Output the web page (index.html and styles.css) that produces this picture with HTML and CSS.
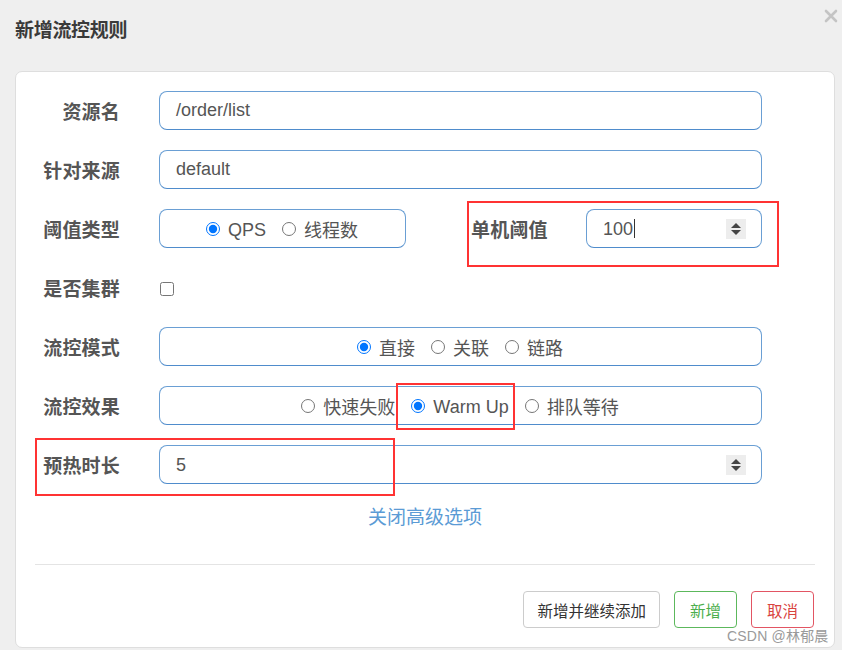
FILE: index.html
```html
<!DOCTYPE html>
<html lang="zh">
<head>
<meta charset="utf-8">
<title>新增流控规则</title>
<link rel="stylesheet" href="styles.css">
</head>
<body>
<div class="page">
  <header class="head">
    <h1 class="title">新增流控规则</h1>
    <span class="close"><svg width="14" height="14" viewBox="0 0 14 14"><path d="M2 2 L12 12 M12 2 L2 12" stroke="#c4c4c4" stroke-width="2.6" stroke-linecap="round"/></svg></span>
  </header>
  <div class="card">
    <div class="form">
      <div class="row">
        <label class="lbl">资源名</label>
        <div class="field">/order/list</div>
      </div>
      <div class="row">
        <label class="lbl">针对来源</label>
        <div class="field">default</div>
      </div>
      <div class="row">
        <label class="lbl">阈值类型</label>
        <div class="field field-short group">
          <label class="opt"><input type="radio" name="t" checked><span class="latin">QPS</span></label>
          <label class="opt"><input type="radio" name="t">线程数</label>
        </div>
        <label class="lbl lbl-inline">单机阈值</label>
        <div class="field grow">
          <span class="val">100</span><span class="caret"></span>
          <span class="spin"><i class="up"></i><i class="down"></i></span>
        </div>
      </div>
      <div class="row">
        <label class="lbl">是否集群</label>
        <input class="check" type="checkbox">
      </div>
      <div class="row">
        <label class="lbl">流控模式</label>
        <div class="field group">
          <label class="opt"><input type="radio" name="m" checked>直接</label>
          <label class="opt"><input type="radio" name="m">关联</label>
          <label class="opt"><input type="radio" name="m">链路</label>
        </div>
      </div>
      <div class="row">
        <label class="lbl">流控效果</label>
        <div class="field group">
          <label class="opt"><input type="radio" name="e">快速失败</label>
          <label class="opt"><input type="radio" name="e" checked><span class="latin">Warm Up</span></label>
          <label class="opt"><input type="radio" name="e">排队等待</label>
        </div>
      </div>
      <div class="row">
        <label class="lbl">预热时长</label>
        <div class="field">
          <span class="val">5</span>
          <span class="spin"><i class="up"></i><i class="down"></i></span>
        </div>
      </div>
    </div>
    <div class="more"><a class="link">关闭高级选项</a></div>
    <hr class="sep">
    <div class="actions">
      <button class="btn btn-wide">新增并继续添加</button>
      <button class="btn btn-ok">新增</button>
      <button class="btn btn-cancel">取消</button>
    </div>
  </div>
  <div class="mark mark-1"></div>
  <div class="mark mark-2"></div>
  <div class="mark mark-3"></div>
  <div class="watermark">CSDN @林郁晨</div>
</div>
</body>
</html>
```

FILE: styles.css
```css
* { box-sizing: border-box; }
html, body { margin: 0; padding: 0; }
body {
  background: #efefef;
  font-family: "Liberation Sans", "Noto Sans CJK SC", sans-serif;
  color: #555;
  width: 842px;
  height: 650px;
  overflow: hidden;
}
.page {
  position: relative;
  padding: 0 7px 0 15px;
}
.head {
  height: 71px;
  padding-top: 18px;
}
.title {
  margin: 0;
  font-size: 19px;
  line-height: 26px;
  font-weight: bold;
  color: #3a3a3a;
  letter-spacing: -0.3px;
}
.close {
  position: absolute;
  top: 9px;
  right: 4px;
  width: 14px;
  height: 14px;
}
.close svg { display: block; }
.card {
  background: #fff;
  border: 1px solid #dedede;
  border-radius: 7px;
  height: 577px;
  padding: 19px 0 0 0;
}
.form {
  display: flex;
  flex-direction: column;
  gap: 20px;
  padding-right: 72px;
}
.row {
  display: flex;
  align-items: center;
  height: 39px;
}
.lbl {
  width: 104px;
  flex: none;
  text-align: right;
  font-size: 19px;
  font-weight: bold;
  color: #555;
  margin-right: 39px;
  letter-spacing: 0.2px;
}
.lbl-inline {
  text-align: left;
  width: 115px;
  margin: 0 0 0 65px;
}
.field {
  flex: 1;
  height: 39px;
  border: 1px solid #6a9fd4;
  border-bottom-color: #4f8ccc;
  border-radius: 8px;
  display: flex;
  align-items: center;
  padding: 0 15px 0 16px;
  font-size: 18px;
  color: #555;
}
.field-short { flex: none; width: 247px; }
.grow { flex: 1; }
.group { justify-content: center; padding: 0 4px 0 0; }
.opt {
  display: inline-flex;
  align-items: center;
  font-size: 18px;
  color: #555;
  margin-left: 3px;
  margin-right: 13px;
  white-space: nowrap;
}
.opt:last-child { margin-right: 0; }
.opt input {
  margin: 0 8px 0 0;
  width: 14px;
  height: 14px;
}
.latin { position: relative; top: 2px; }
.val { line-height: 1; }
.caret {
  display: inline-block;
  width: 1px;
  height: 19px;
  background: #333;
  margin-left: 1px;
}
.spin {
  margin-left: auto;
  width: 20px;
  height: 20px;
  background: #ededed;
  display: flex;
  flex-direction: column;
  align-items: center;
  justify-content: center;
  gap: 2px;
}
.spin i {
  display: block;
  width: 0;
  height: 0;
  border-left: 5px solid transparent;
  border-right: 5px solid transparent;
}
.spin .up { border-bottom: 5px solid #444; }
.spin .down { border-top: 5px solid #444; }
.check {
  margin: 3px 0 0 1px;
  width: 14px;
  height: 14px;
}
.more {
  margin-top: 22px;
  text-align: center;
  height: 24px;
  line-height: 24px;
}
.link {
  font-size: 19px;
  color: #5b9bd5;
  cursor: pointer;
}
.sep {
  margin: 34px 19px 0 19px;
  border: 0;
  border-top: 1px solid #e4e4e4;
  height: 0;
}
.actions {
  display: flex;
  justify-content: flex-end;
  gap: 14px;
  margin-top: 26px;
  padding-right: 20px;
}
.btn {
  height: 37px;
  padding: 0 15px;
  font-family: "Liberation Sans", "Noto Sans CJK SC", sans-serif;
  font-size: 15.5px;
  background: #fff;
  border: 1px solid #cccccc;
  border-radius: 4px;
  color: #333;
}
.btn-wide { padding: 0 13px; }
.btn-ok { border-color: #5cb85c; color: #4cae4c; padding: 0 15px; }
.btn-cancel { border-color: #e25563; color: #d9443f; padding: 0 15px; }
.mark {
  position: absolute;
  border: 2.5px solid #ff3333;
}
.mark-1 { left: 467px; top: 201px; width: 312px; height: 66px; }
.mark-2 { left: 396px; top: 383px; width: 119px; height: 47px; }
.mark-3 { left: 35px; top: 438px; width: 360px; height: 58px; }
.watermark {
  position: absolute;
  left: 727px;
  top: 625px;
  font-size: 14px;
  color: #9a9a9a;
  letter-spacing: 0.2px;
  text-shadow: 0 0 1px #fff;
}
```
